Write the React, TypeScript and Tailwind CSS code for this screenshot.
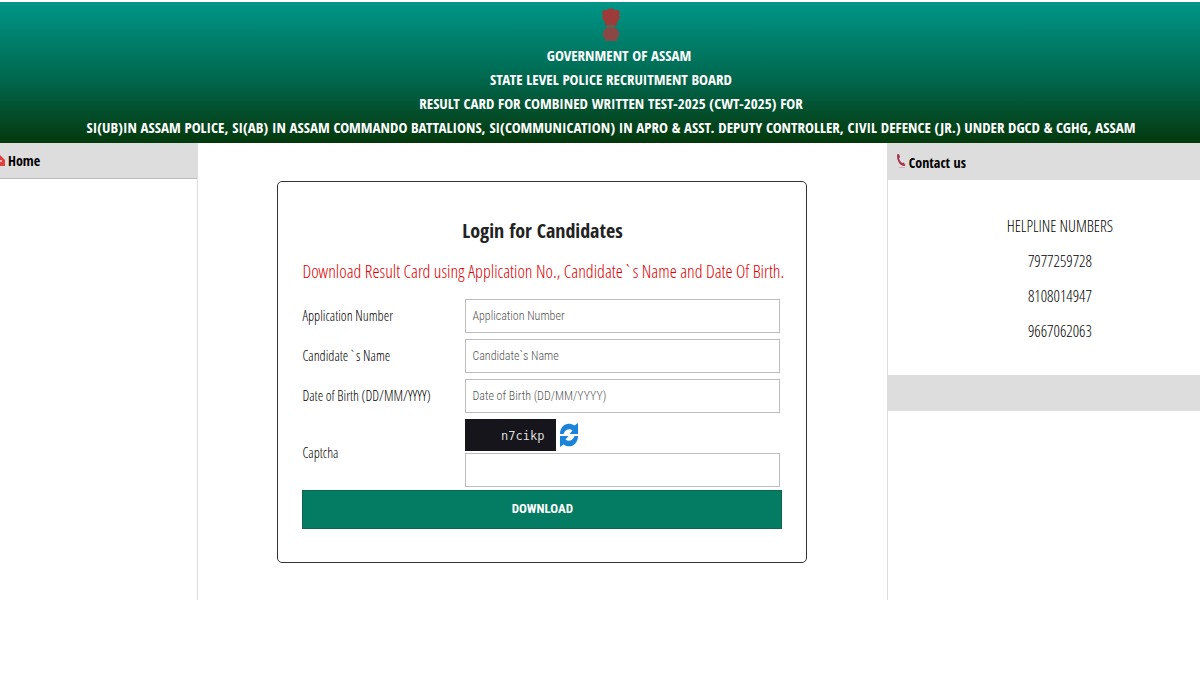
import { useState } from 'react';

const headerLines = [
  'STATE LEVEL POLICE RECRUITMENT BOARD',
  'RESULT CARD FOR COMBINED WRITTEN TEST-2025 (CWT-2025) FOR',
  'SI(UB)IN ASSAM POLICE, SI(AB) IN ASSAM COMMANDO BATTALIONS, SI(COMMUNICATION) IN APRO & ASST. DEPUTY CONTROLLER, CIVIL DEFENCE (JR.) UNDER DGCD & CGHG, ASSAM',
];

const fields = [
  { id: 'application-number', label: 'Application Number' },
  { id: 'candidate-name', label: 'Candidate`s Name' },
  { id: 'date-of-birth', label: 'Date of Birth (DD/MM/YYYY)' },
];

const helplines = ['7977259728', '8108014947', '9667062063'];

const inputClass =
  "h-[34px] w-full border border-[#bdbdbd] bg-white px-1.5 font-['Roboto_Condensed_Light','Roboto_Condensed','Liberation_Sans',sans-serif] text-xs font-light text-[#333] outline-none placeholder:text-[#555]";

function Emblem() {
  return (
    <svg width="22" height="35" viewBox="0 0 22 35" aria-hidden="true">
      <path d="M2 4 4 2h3l2-1.500h4L15 2h3l2 2-1 4 1 2-3 4v3l-3 1.500H8L5 17v-3L2 10l1-2z" fill="#9c3b3a" />
      <path d="M7 17h8v4H7z" fill="#62604e" />
      <path d="M6 20h10l3 4v4l-2 2v3H5v-3l-2-2v-4z" fill="#8b4744" />
    </svg>
  );
}

function HomeIcon() {
  return (
    <svg width="5" height="12" viewBox="0 0 5 12" aria-hidden="true">
      <path d="M0 0 5 5v6H0z" fill="#e0403c" />
      <path d="M0 5h2v2H0z" fill="#f8b4ae" />
    </svg>
  );
}

function PhoneIcon() {
  return (
    <svg width="11" height="18" viewBox="0 0 11 18" aria-hidden="true">
      <path d="M1 .5 3 0l1 3-1 1.500q1 3 3 4.500l1.500-.5 2 2.500-1 1Q5.500 12.500 3 9 .5 5 1 .500z" fill="#a3344c" />
      <path d="M3 13.500h6" stroke="#e0a9b4" strokeWidth="1" />
    </svg>
  );
}

function RefreshIcon() {
  return (
    <svg width="20" height="26" viewBox="0 0 20 26" aria-hidden="true">
      <path d="M1 12C1 3 9-1 15.500 3.500L19 1v11h-8.500l3-3.500C10.500 6 6 7.500 4.500 12z" fill="#1c84d8" />
      <path d="M19 14c0 9-8 13-14.500 8.500L1 25V14h8.500l-3 3.500c3 2.500 7.500 1 9-3.500z" fill="#1c84d8" />
    </svg>
  );
}

export default function App() {
  const [values, setValues] = useState<Record<string, string>>({});

  return (
    <div className="bg-white pt-0.5 font-['Open_Sans_Condensed_Light','Open_Sans',sans-serif] text-sm text-black">
      <header className="flex flex-col items-center bg-linear-to-b from-[#009688] via-[#006c53] to-[#04390b] pt-1.5 pb-1 pl-[22px] text-center font-['Open_Sans_Condensed','Open_Sans',sans-serif] text-[15px] leading-6 font-semibold text-white">
        <Emblem />
        <div className="pl-4">GOVERNMENT OF ASSAM</div>
        {headerLines.map((line) => (
          <div key={line} className="whitespace-nowrap">
            {line}
          </div>
        ))}
      </header>

      <div className="flex items-stretch">
        <aside className="w-[16.5%] border-r border-[#ddd]">
          <a
            href="#home"
            className="flex h-9 items-center gap-[3px] border-b border-[#bbb] bg-[#ddd] font-['Open_Sans_Condensed','Open_Sans',sans-serif] font-semibold"
          >
            <HomeIcon />
            Home
          </a>
        </aside>

        <main className="flex min-w-0 flex-1 justify-center pt-[38px] pb-[37px]">
          <form
            className="w-full max-w-[530px] rounded-[5px] border border-[#333] px-6 py-[33px]"
            onSubmit={(e) => e.preventDefault()}
          >
            <h1 className="text-center font-['Open_Sans_Condensed','Open_Sans',sans-serif] text-xl leading-8 font-semibold text-[#222]">
              Login for Candidates
            </h1>
            <p className="mt-2 text-center text-lg leading-8 whitespace-nowrap text-[#d00]">
              Download Result Card using Application No., Candidate`s Name and Date Of Birth.
            </p>

            <div className="mt-3 grid grid-cols-[163px_1fr] items-center gap-y-1.5 pr-0.5">
              {fields.map((field) => (
                <div key={field.id} className="contents">
                  <label htmlFor={field.id}>{field.label}</label>
                  <input
                    id={field.id}
                    type="text"
                    placeholder={field.label}
                    value={values[field.id] ?? ''}
                    onChange={(e) => setValues({ ...values, [field.id]: e.target.value })}
                    className={inputClass}
                  />
                </div>
              ))}

              <label htmlFor="captcha">Captcha</label>
              <div>
                <div className="flex items-center gap-[3px]">
                  <div className="flex h-8 w-[91px] items-center justify-end bg-[#15151b] pt-0.5 pr-3 font-['DejaVu_Sans_Mono',monospace] text-xs text-[#ddd]">
                    n7cikp
                  </div>
                  <button type="button" aria-label="Refresh captcha">
                    <RefreshIcon />
                  </button>
                </div>
                <input id="captcha" type="text" className={`${inputClass} mt-0.5`} />
              </div>
            </div>

            <button
              type="submit"
              className="mt-[3px] h-[39px] w-full border border-[#0c6650] bg-[#047b63] font-['Roboto_Condensed','Liberation_Sans',sans-serif] text-[13px] font-bold text-white"
            >
              DOWNLOAD
            </button>
          </form>
        </main>

        <aside className="w-[26.1%] border-l border-[#ddd]">
          <h2 className="flex h-[37px] items-center gap-0.5 bg-[#ddd] pt-0.5 pl-2 font-['Open_Sans_Condensed','Open_Sans',sans-serif] font-semibold">
            <PhoneIcon />
            Contact us
          </h2>
          <div className="flex flex-col items-center gap-[11px] pt-[34px] pb-[32px] pl-8 text-base leading-6">
            <div>HELPLINE NUMBERS</div>
            {helplines.map((number) => (
              <div key={number}>{number}</div>
            ))}
          </div>
          <div className="h-9 bg-[#ddd]" />
        </aside>
      </div>
    </div>
  );
}
